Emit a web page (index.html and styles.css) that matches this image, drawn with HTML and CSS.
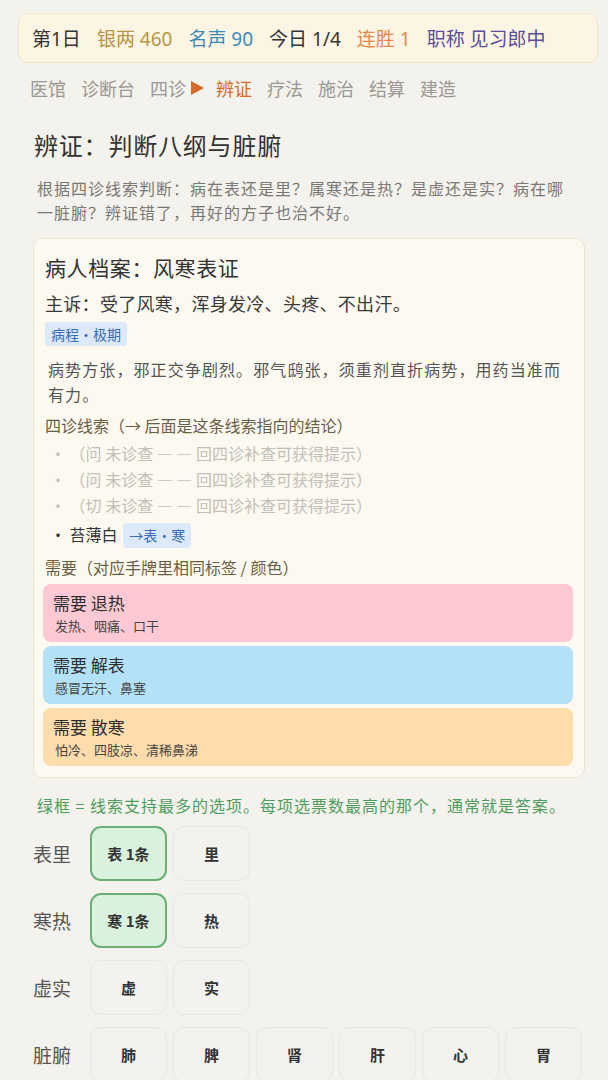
FILE: index.html
```html
<!DOCTYPE html>
<html lang="zh-CN">
<head>
  <meta charset="UTF-8" />
  <meta name="viewport" content="width=device-width, initial-scale=1.0" />
  <title>辨证</title>
  <link rel="stylesheet" href="styles.css">
</head>
<body>
  <div class="page">
    <div class="topbar">
      <span class="day">第1日</span>
      <span class="silver">银两 460</span>
      <span class="fame">名声 90</span>
      <span class="today">今日 1/4</span>
      <span class="streak">连胜 1</span>
      <span class="rank">职称 见习郎中</span>
    </div>

    <nav class="steps">
      <span>医馆</span>
      <span>诊断台</span>
      <span>四诊</span>
      <span class="cur"><svg width="15" height="16" viewBox="0 0 15 16"><path d="M1 1 L14 8 L1 15 Z" fill="#d9692a"/></svg>辨证</span>
      <span>疗法</span>
      <span>施治</span>
      <span>结算</span>
      <span>建造</span>
    </nav>

    <div class="main">
      <h2>辨证：判断八纲与脏腑</h2>
      <p class="intro">根据四诊线索判断：病在表还是里？属寒还是热？是虚还是实？病在哪一脏腑？辨证错了，再好的方子也治不好。</p>

      <div class="card">
        <h3>病人档案：风寒表证</h3>
        <p class="complaint">主诉：受了风寒，浑身发冷、头疼、不出汗。</p>
        <div class="phase">病程·极期</div>
        <p class="desc">病势方张，邪正交争剧烈。邪气鸱张，须重剂直折病势，用药当准而有力。</p>

        <div class="sub-head">四诊线索（→ 后面是这条线索指向的结论）</div>
        <div class="clues">
          <div class="clue missing">·&nbsp;（问 未诊查 — — 回四诊补查可获得提示）</div>
          <div class="clue missing">·&nbsp;（问 未诊查 — — 回四诊补查可获得提示）</div>
          <div class="clue missing">·&nbsp;（切 未诊查 — — 回四诊补查可获得提示）</div>
          <div class="clue found">· 苔薄白 <span class="hint">→表·寒</span></div>
        </div>

        <div class="sub-head need-head">需要（对应手牌里相同标签 / 颜色）</div>
        <div class="needs">
          <div class="need heat">
            <div class="need-title">需要 退热</div>
            <div class="need-sub">发热、咽痛、口干</div>
          </div>
          <div class="need surface">
            <div class="need-title">需要 解表</div>
            <div class="need-sub">感冒无汗、鼻塞</div>
          </div>
          <div class="need cold">
            <div class="need-title">需要 散寒</div>
            <div class="need-sub">怕冷、四肢凉、清稀鼻涕</div>
          </div>
        </div>
      </div>

      <p class="note">绿框 = 线索支持最多的选项。每项选票数最高的那个，通常就是答案。</p>

      <div class="choices">
        <div class="row">
          <span class="label">表里</span>
          <button class="opt best">表 1条</button>
          <button class="opt">里</button>
        </div>
        <div class="row">
          <span class="label">寒热</span>
          <button class="opt best">寒 1条</button>
          <button class="opt">热</button>
        </div>
        <div class="row">
          <span class="label">虚实</span>
          <button class="opt">虚</button>
          <button class="opt">实</button>
        </div>
        <div class="row">
          <span class="label">脏腑</span>
          <button class="opt">肺</button>
          <button class="opt">脾</button>
          <button class="opt">肾</button>
          <button class="opt">肝</button>
          <button class="opt">心</button>
          <button class="opt">胃</button>
        </div>
      </div>
    </div>
  </div>
</body>
</html>
```

FILE: styles.css
```css
body {
  margin: 0;
  background: #f4f2ec;
  font-family: "Noto Sans CJK SC", "Noto Sans", sans-serif;
  color: #333;
}
.page {
  padding: 13px 10px 0 18px;
}
.topbar {
  height: 48px;
  display: flex;
  align-items: center;
  gap: 16px;
  padding: 0 13px;
  background: #fdf5e4;
  border: 1px solid #f0e6cc;
  border-radius: 10px;
  font-family: "Noto Sans", "Noto Sans CJK SC", sans-serif;
  font-size: 19px;
}
.silver { color: #b69742; }
.fame { color: #3b8ab6; }
.streak { color: #e5874a; }
.rank { color: #5a4d9b; }

.steps {
  display: flex;
  gap: 15px;
  margin-top: 13px;
  padding-left: 12px;
  line-height: 24px;
  font-size: 18px;
  color: #9a9893;
}
.steps .cur {
  display: flex;
  align-items: center;
  margin-left: -11px;
  color: #d9692a;
}
.steps .cur svg {
  margin-right: 11px;
}

.main {
  padding: 0 13px 0 15px;
}
h2 {
  margin: 29px 0 0;
  padding-left: 1px;
  font-size: 24px;
  font-weight: 400;
  letter-spacing: 0.8px;
  line-height: 32px;
  color: #333;
}
.intro {
  margin: 15px 0 0;
  padding: 0 14px 0 4px;
  font-size: 16px;
  letter-spacing: 1px;
  line-height: 24px;
  color: #7a7874;
}

.card {
  margin-top: 14px;
  padding: 13px 11px 11px;
  background: #fcf9f0;
  border: 1px solid #ebe4d2;
  border-radius: 9px;
}
.card h3 {
  margin: 0;
  font-size: 21px;
  font-weight: 400;
  letter-spacing: 0.6px;
  line-height: 30px;
}
.complaint {
  margin: 8px 0 0;
  font-size: 18px;
  letter-spacing: 0.3px;
  line-height: 26px;
  color: #3a3a3a;
}
.phase {
  width: fit-content;
  margin-top: 6px;
  padding: 0 6px;
  line-height: 24px;
  font-size: 14px;
  color: #3b6cb8;
  background: #dde8f9;
  border-radius: 4px;
}
.desc {
  margin: 11px 0 0;
  padding-left: 3px;
  font-size: 16px;
  letter-spacing: 1.1px;
  line-height: 25px;
  color: #555;
}
.sub-head {
  margin-top: 5px;
  font-size: 16px;
  line-height: 26px;
  color: #6c5e44;
}
.clues {
  margin-top: 2px;
}
.clue {
  padding-left: 5px;
  font-size: 16px;
  line-height: 26px;
}
.clue.missing {
  color: #c3bfb7;
}
.clue.found {
  margin-top: 2px;
  line-height: 28px;
  color: #333;
}
.hint {
  display: inline-block;
  padding: 0 6px;
  margin-left: 2px;
  font-size: 14px;
  line-height: 25px;
  color: #3b6cb8;
  background: #dce9fb;
  border-radius: 4px;
}
.need-head {
  margin-top: 6px;
}
.needs {
  display: flex;
  flex-direction: column;
  gap: 4px;
  margin: 4px 0 0 -2px;
}
.need {
  height: 58px;
  box-sizing: border-box;
  padding: 8px 10px 0;
  border-radius: 8px;
}
.need-title {
  font-size: 17px;
  line-height: 22px;
  color: #2e2e2e;
}
.need-sub {
  margin-top: 3px;
  padding-left: 2px;
  font-size: 13px;
  line-height: 18px;
  color: #444;
}
.heat { background: #ffc9d3; }
.surface { background: #b3e2f8; }
.cold { background: #fedcac; }

.note {
  margin: 15px 0 0;
  padding-left: 4px;
  font-size: 16px;
  letter-spacing: 1px;
  line-height: 24px;
  color: #4f9c5e;
}
.choices {
  display: flex;
  flex-direction: column;
  gap: 12px;
  margin-top: 9px;
}
.row {
  display: flex;
  align-items: center;
  gap: 6px;
}
.label {
  width: 51px;
  font-size: 19px;
  color: #555;
}
.opt {
  width: 77px;
  height: 55px;
  padding: 0;
  font-family: inherit;
  font-size: 15px;
  font-weight: 700;
  color: #333;
  background: #f3f2ee;
  border: 1px solid #e9e7e1;
  border-radius: 11px;
}
.opt.best {
  background: #daf2dd;
  border: 2px solid #6cae79;
}
```
